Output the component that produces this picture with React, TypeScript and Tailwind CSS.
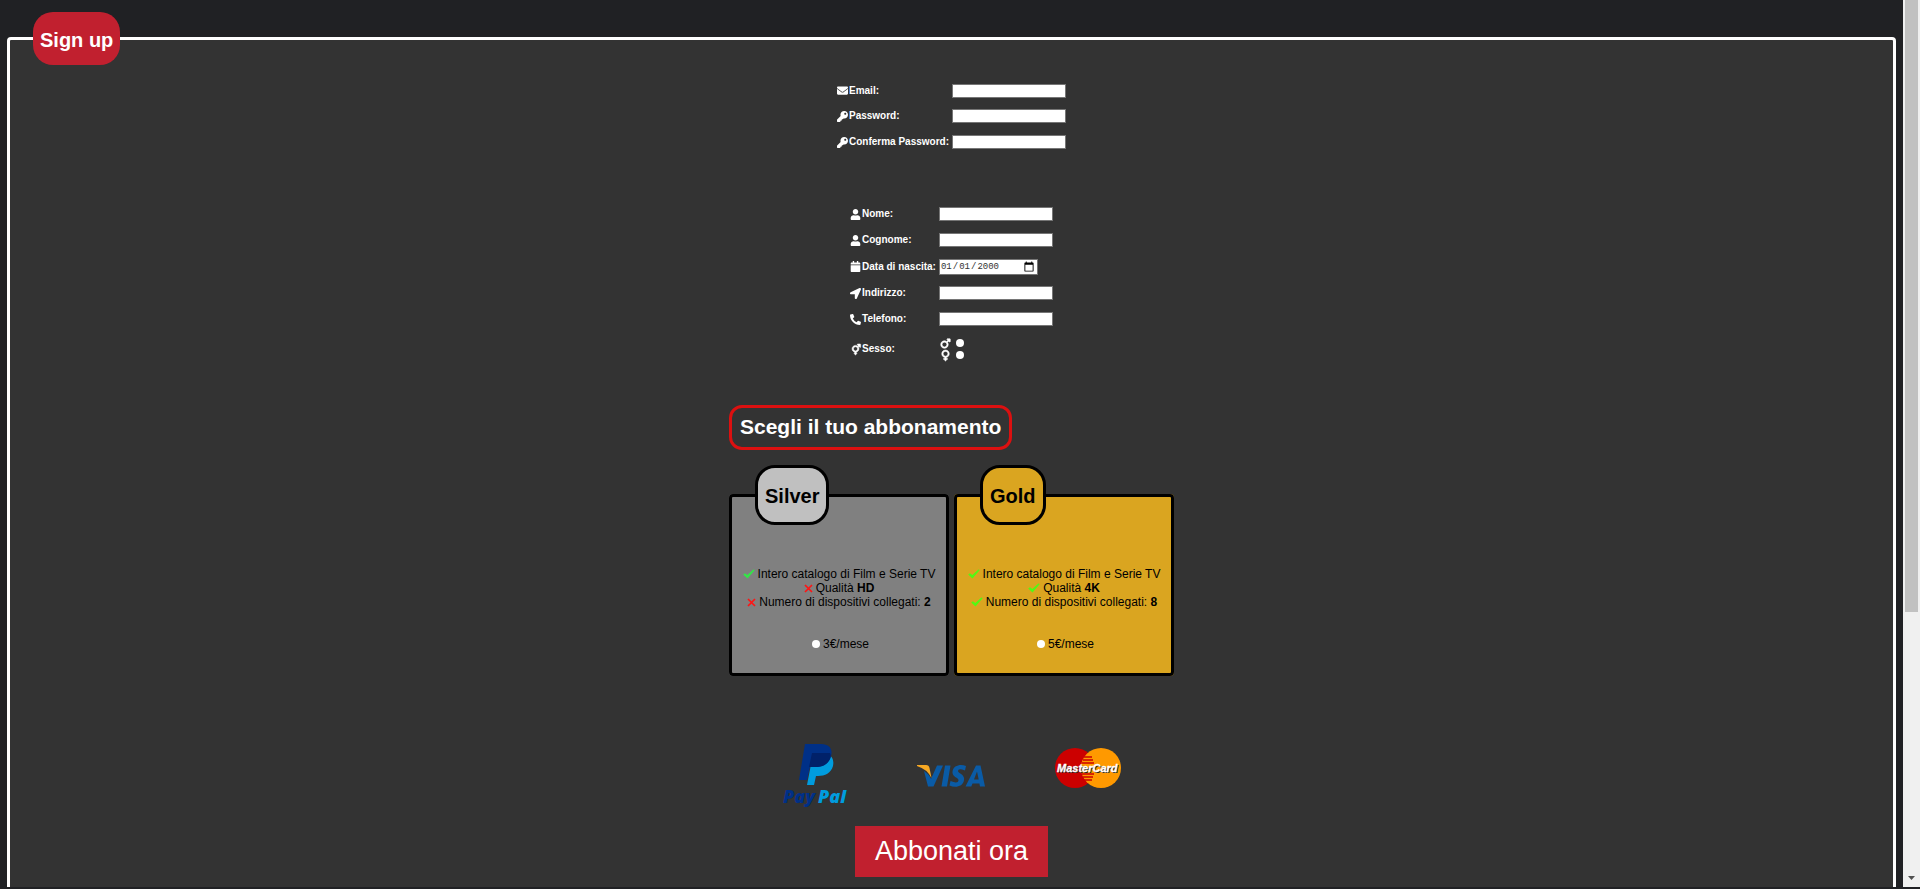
import type { ReactNode } from 'react';
import {
  FaCalendar,
  FaEnvelope,
  FaKey,
  FaLocationArrow,
  FaPhoneAlt,
  FaUser,
} from 'react-icons/fa';
import { FaMars, FaMarsAndVenus, FaVenus } from 'react-icons/fa6';

const radio = 'size-2 shrink-0 appearance-none rounded-full bg-white checked:border-2 checked:border-blue-600';

function Row({ id, icon, label, height, children }: { id: string; icon: ReactNode; label: string; height: string; children?: ReactNode }) {
  return (
    <tr className={height}>
      <th scope="row" className="p-0 pr-[3px] text-left align-middle font-bold">
        <label htmlFor={id} className="flex items-center gap-px whitespace-nowrap">
          {icon}
          {label}
        </label>
      </th>
      <td className="p-0 align-middle">
        {children ?? (
          <input
            id={id}
            type={id === 'password' || id === 'confirm' ? 'password' : id === 'email' ? 'email' : 'text'}
            className="block h-[14px] w-[114px] border border-[#767676] bg-white px-0.5 text-[10px] text-black"
          />
        )}
      </td>
    </tr>
  );
}

function Check({ className }: { className: string }) {
  return (
    <svg viewBox="0 0 12 10" className={`h-[10px] w-3 ${className}`} aria-hidden="true">
      <path d="M0.2 5.6 2 4.2 4.3 6 10.4 0.4 11.8 1 4.5 9.4Z" fill="currentColor" />
    </svg>
  );
}

function Cross() {
  return (
    <svg viewBox="0 0 9 9" className="size-[9px]" aria-hidden="true">
      <path d="M1 1 8 8M8 1 1 8" stroke="#ff1414" strokeWidth="1.7" />
    </svg>
  );
}

function Plan({ name, card, badge, features, price, id }: { name: string; card: string; badge: string; features: ReactNode; price: string; id: string }) {
  return (
    <fieldset className={`w-[220px] rounded-[4px] border-[3px] border-black ${card}`}>
      <legend className={`ml-[23px] rounded-[20px] border-[3px] border-black px-[7px] pt-4 pb-[14px] text-[20px] leading-6 font-bold ${badge}`}>
        {name}
      </legend>
      <ul className="mt-[42px] whitespace-nowrap">{features}</ul>
      <label htmlFor={id} className="mt-7 mb-[22px] flex items-center justify-center gap-[3px] pl-[3px]">
        <input id={id} type="radio" name="plan" className={radio} />
        {price}
      </label>
    </fieldset>
  );
}

const item = 'flex h-[14px] items-center justify-center gap-[3px]';

function PayPal() {
  return (
    <svg viewBox="0 0 64 66" className="h-[66px] w-16" role="img" aria-label="PayPal">
      <path d="M30 11H44C50 13 51 18 50 23 48 30 42 33 35 33H33L31 42H24Z" fill="#009cde" />
      <path d="M22 1H38C47 1 50 7 48 13 46 21 40 24 32 24H27L24 37H16Z" fill="#003087" />
      <path d="M29 10H47C48 12 48 14 47 16 44 22 39 24 32 24H26Z" fill="#012169" />
      <g fontFamily="Open Sans, Liberation Sans, sans-serif" fontSize="18" fontWeight="800" fontStyle="italic">
        <text x="0" y="60" fill="#003087">Pay</text>
        <text x="35" y="60" fill="#009cde">Pal</text>
      </g>
    </svg>
  );
}

function Visa() {
  return (
    <svg viewBox="0 0 68 22" className="h-[22px] w-[68px]" role="img" aria-label="Visa">
      <path d="M0 0H9Q12 0 12.500 3L14.500 13Q10 4 0 1Z" fill="#f7a823" />
      <path d="M14 14 20 .5H26L16.500 21.500H11L7 6Q12 9 14 14ZM28 .5H33.500L30 21.500H24.500ZM49 1 48 5.500Q41 3 41 6C41 8.500 48 9 47 15 46 22 38 23 32.500 20.500L33.500 16Q41 19 41.500 15.500C42 12.500 35 12.500 35.500 7 36 0 44-1 49 1ZM59 .5H63.500L68 21.500H63L62.400 18.500H55.500L54.300 21.500H48.500ZM60 6.500 57 14.500H61.700Z" fill="#0a5ba6" fillRule="evenodd" />
    </svg>
  );
}

function MasterCard() {
  return (
    <svg viewBox="0 0 66 40" className="h-10 w-[66px]" role="img" aria-label="MasterCard">
      <circle cx="20" cy="20" r="20" fill="#c00" />
      <circle cx="46" cy="20" r="20" fill="#f90" />
      <path d="M29 9H37M28 12H38M27 15H39M27 26H39M28 29H38M29 32H37" stroke="#c00" strokeWidth="1.5" />
      <g fontFamily="Liberation Sans, Arial, sans-serif" fontSize="11" fontWeight="700" fontStyle="italic">
        <text x="3" y="25" fill="#222">MasterCard</text>
        <text x="2" y="24" fill="#fff" stroke="#fff" strokeWidth="0.3">MasterCard</text>
      </g>
    </svg>
  );
}

export default function App() {
  const icon = 'size-[11px]';
  const boldIcon = 'size-[11px] overflow-visible [stroke-width:24]';
  return (
    <div className="flex h-screen flex-col overflow-hidden bg-[#202124] font-['Liberation_Sans',Arial,sans-serif]">
      <div className="flex min-h-0 flex-1">
        <main className="min-w-0 flex-1 overflow-hidden px-[7px] pt-3">
          <form onSubmit={(e) => e.preventDefault()}>
            <fieldset className="rounded-[4px] border-[3px] border-white bg-[#333] pb-20">
              <legend className="ml-[23px] rounded-[20px] bg-[#c1202f] px-[7px] pt-4 pb-[13px] text-[20px] leading-6 font-bold text-white">
                Sign up
              </legend>
              <div className="flex flex-col items-center">
                <table className="mt-[13px] border-collapse text-[10px] leading-3 text-white">
                  <tbody>
                    <Row id="email" height="h-[25px]" icon={<FaEnvelope className={icon} />} label="Email:" />
                    <Row id="password" height="h-[26px]" icon={<FaKey className={icon} />} label="Password:" />
                    <Row id="confirm" height="h-[26px]" icon={<FaKey className={icon} />} label="Conferma Password:" />
                  </tbody>
                </table>
                <table className="mt-[46px] border-collapse text-[10px] leading-3 text-white">
                  <tbody>
                    <Row id="nome" height="h-[26px]" icon={<FaUser className={icon} />} label="Nome:" />
                    <Row id="cognome" height="h-[26px]" icon={<FaUser className={icon} />} label="Cognome:" />
                    <Row id="nascita" height="h-[27px]" icon={<FaCalendar className={icon} />} label="Data di nascita:">
                      <input
                        id="nascita"
                        type="date"
                        defaultValue="2000-01-01"
                        className="block h-4 w-[99px] border border-[#767676] bg-white pr-0.5 font-['Liberation_Mono',monospace] text-[9px] leading-[14px] text-[#333] [&::-webkit-calendar-picker-indicator]:m-0 [&::-webkit-calendar-picker-indicator]:size-3 [&::-webkit-calendar-picker-indicator]:p-0 [&::-webkit-datetime-edit]:grow"
                      />
                    </Row>
                    <Row id="indirizzo" height="h-[26px]" icon={<FaLocationArrow className={icon} />} label="Indirizzo:" />
                    <Row id="telefono" height="h-[26px]" icon={<FaPhoneAlt className={icon} />} label="Telefono:" />
                    <Row id="maschio" height="h-[34px]" icon={<FaMarsAndVenus className={boldIcon} />} label="Sesso:">
                      <div className="flex flex-col pl-px">
                        <label className="flex h-3 items-center gap-[5px]" aria-label="Maschio">
                          <FaMars className={boldIcon} />
                          <input id="maschio" type="radio" name="sesso" className={radio} />
                        </label>
                        <label className="flex h-3 items-center gap-[5px]" aria-label="Femmina">
                          <FaVenus className={boldIcon} />
                          <input type="radio" name="sesso" className={radio} />
                        </label>
                      </div>
                    </Row>
                  </tbody>
                </table>
                <section className="mt-[39px] text-[12px] leading-[14px] text-black">
                  <h2 className="w-fit rounded-[13px] border-[3px] border-[#dc1010] px-2 pt-1.5 pb-2 text-[21px] leading-[25px] font-bold text-white">
                    Scegli il tuo abbonamento
                  </h2>
                  <div className="mt-[15px] flex gap-[5px]">
                    <Plan
                      id="silver"
                      name="Silver"
                      card="bg-[#808080]"
                      badge="bg-[#c0c0c0]"
                      price="3€/mese"
                      features={
                        <>
                          <li className={item}><Check className="text-[#32e646]" /> Intero catalogo di Film e Serie TV</li>
                          <li className={item}><Cross /> <span>Qualità <b>HD</b></span></li>
                          <li className={item}><Cross /> <span>Numero di dispositivi collegati: <b>2</b></span></li>
                        </>
                      }
                    />
                    <Plan
                      id="gold"
                      name="Gold"
                      card="bg-[#daa520]"
                      badge="bg-[#daa520]"
                      price="5€/mese"
                      features={
                        <>
                          <li className={item}><Check className="text-[#50fa14]" /> Intero catalogo di Film e Serie TV</li>
                          <li className={item}><Check className="text-[#50fa14]" /> <span>Qualità <b>4K</b></span></li>
                          <li className={item}><Check className="text-[#50fa14]" /> <span>Numero di dispositivi collegati: <b>8</b></span></li>
                        </>
                      }
                    />
                  </div>
                </section>
                <div className="mt-[67px] flex items-center gap-[70px]">
                  <PayPal />
                  <Visa />
                  <div className="pb-4">
                    <MasterCard />
                  </div>
                </div>
                <button type="submit" className="mt-[17px] bg-[#c1202f] px-5 py-2.5 text-[27px] leading-[31px] text-white">
                  Abbonati ora
                </button>
              </div>
            </fieldset>
          </form>
        </main>
        <aside className="flex w-[17px] flex-col justify-between bg-[#f0f0f0] px-0.5" aria-hidden="true">
          <div className="h-[69%] bg-[#c1c1c1]" />
          <svg viewBox="0 0 13 17" className="h-[17px] w-[13px]">
            <path d="M3 6H10L6.500 10Z" fill="#505050" />
          </svg>
        </aside>
      </div>
      <footer className="h-0.5 bg-[#202124]" />
    </div>
  );
}
